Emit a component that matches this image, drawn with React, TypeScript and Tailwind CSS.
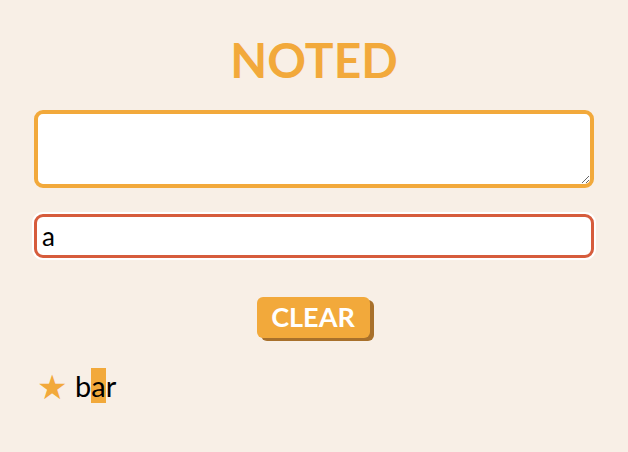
import { useState } from 'react';

const App = () => {
  const [note, setNote] = useState('');
  const [query, setQuery] = useState('a');
  const notes = ['bar'];

  const highlight = (text: string) => {
    if (!query) return text;
    const i = text.indexOf(query);
    if (i < 0) return text;
    return (
      <>
        {text.slice(0, i)}
        <mark className="bg-[#f2a93b] text-black">{text.slice(i, i + query.length)}</mark>
        {text.slice(i + query.length)}
      </>
    );
  };

  return (
    <div className="min-h-[452px] w-full bg-[#f8efe6] font-['Lato',sans-serif]">
      <div className="flex flex-col px-[34px] pt-[32px]">
        <h1 className="text-center text-[48px] leading-[56px] font-bold text-[#f2a93b]">NOTED</h1>
        <textarea
          value={note}
          onChange={(e) => setNote(e.target.value)}
          className="mt-[22px] h-[78px] w-full rounded-[9px] border-4 border-[#f2a93b] bg-white px-2 py-1 text-[24px] outline-none"
        />
        <input
          value={query}
          onChange={(e) => setQuery(e.target.value)}
          className="mt-[26px] h-[44px] w-full rounded-[9px] border-[3px] border-[#d65c3c] bg-white px-[5px] text-[26px] text-black outline-none ring-2 ring-white"
        />
        <div className="mt-[39px] flex justify-center">
          <button
            onClick={() => setNote('')}
            className="mr-[2px] h-[41px] w-[113px] rounded-[6px] bg-[#f2a93b] text-[27px] font-bold text-white shadow-[4px_3px_0_#a8702b]"
          >
            CLEAR
          </button>
        </div>
        <ul className="mt-[31px] flex flex-col">
          {notes.map((n, idx) => (
            <li key={idx} className="flex items-center gap-[8px] pl-[3px] text-[29px] leading-[34px] text-black">
              <span className="text-[34px] leading-[34px] text-[#f2a93b]">★</span>
              <span>{highlight(n)}</span>
            </li>
          ))}
        </ul>
      </div>
    </div>
  );
};

export default App;
